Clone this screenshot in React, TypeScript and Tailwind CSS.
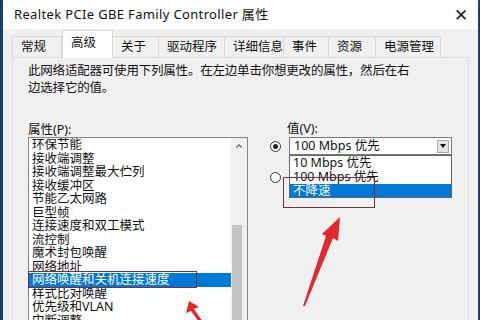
import { ChevronUp } from 'lucide-react'

const font = { fontFamily: '"Noto Sans", "Noto Sans CJK SC", sans-serif' }

const tabs = [
  { label: '常规', w: 'w-[50px]' },
  { label: '高级', w: 'w-[51px]', active: true },
  { label: '关于', w: 'w-[46px]' },
  { label: '驱动程序', w: 'w-[66px]' },
  { label: '详细信息', w: 'w-[59px]' },
  { label: '事件', w: 'w-[45px]' },
  { label: '资源', w: 'w-[47px]' },
  { label: '电源管理', w: 'w-[65px]' },
]

const properties = [
  '环保节能',
  '接收端调整',
  '接收端调整最大伫列',
  '接收缓冲区',
  '节能乙太网路',
  '巨型帧',
  '连接速度和双工模式',
  '流控制',
  '魔术封包唤醒',
  '网络地址',
  '网络唤醒和关机连接速度',
  '样式比对唤醒',
  '优先级和VLAN',
  '中断调整',
  '传输缓冲区',
]

function Radio({ checked }: { checked?: boolean }) {
  return (
    <span className="flex h-[11px] w-[11px] items-center justify-center rounded-full border border-[#333] bg-white">
      {checked && <span className="h-[5px] w-[5px] rounded-full bg-[#222]" />}
    </span>
  )
}

export default function App() {
  return (
    <div className="relative flex h-[320px] w-[480px] overflow-hidden bg-[#17406e] text-[12.5px] text-[#111]" style={font}>
      <div className="ml-[3px] flex w-[475px] flex-col bg-[#f0f0f0]">
        {/* Title bar */}
        <div className="flex h-[29px] shrink-0 items-center justify-between bg-white pl-[11px] pr-[10px]">
          <span className="text-[13px] tracking-[0.35px] text-[#111]">Realtek PCIe GBE Family Controller 属性</span>
          <span className="text-[17px] font-light leading-none text-[#222]">✕</span>
        </div>

        <div className="flex flex-1 flex-col px-[9px]">
          {/* Tabs */}
          <div className="flex h-[28px] items-end">
            {tabs.map((t) =>
              t.active ? (
                <div
                  key={t.label}
                  className={`relative z-10 -mb-px flex h-[28px] items-center border-x border-t border-[#d9d9d9] bg-white pb-[3px] pl-[8px] ${t.w}`}
                >
                  {t.label}
                </div>
              ) : (
                <div
                  key={t.label}
                  className={`flex h-[21px] items-center border-t border-r border-[#d9d9d9] bg-[#f0f0f0] pl-[8px] first:border-l ${t.w}`}
                >
                  {t.label}
                </div>
              ),
            )}
          </div>

          {/* Panel */}
          <div className="relative flex flex-1 flex-col border border-[#dcdcdc] bg-[#f0f0f0] pl-[15px] pt-[4px]">
            <p className="leading-[17px] tracking-[-0.2px]">
              此网络适配器可使用下列属性。在左边单击你想更改的属性，然后在右
              <br />
              边选择它的值。
            </p>

            <div className="mt-[25px] flex flex-1 gap-[22px]">
              {/* Left column */}
              <div className="flex w-[220px] flex-col">
                <div className="h-[17px] leading-[17px]">属性(P):</div>
                <div className="mt-[-1px] flex flex-1 border border-[#82878f] bg-white">
                  <ul className="flex-1">
                    {properties.map((p) => (
                      <li
                        key={p}
                        className={`h-[13.5px] whitespace-nowrap pl-[3px] leading-[13.5px] ${
                          p === '网络唤醒和关机连接速度' ? 'bg-[#0078d7] text-white' : ''
                        }`}
                      >
                        {p}
                      </li>
                    ))}
                  </ul>
                  <div className="flex w-[16px] flex-col bg-[#f0f0f0]">
                    <div className="flex h-[16px] items-center justify-center">
                      <ChevronUp size={10} strokeWidth={2.5} className="text-[#333]" />
                    </div>
                    <div className="mt-[71px] ml-[1px] w-[10px] flex-1 bg-[#c4c4c4]" />
                  </div>
                </div>
              </div>

              {/* Right column */}
              <div className="relative flex flex-col">
                <div className="h-[15px] pl-[17px] leading-[15px]">值(V):</div>
                <div className="mt-[1px] flex items-center gap-[8px]">
                  <Radio checked />
                  <div className="flex h-[18px] w-[163px] items-center justify-between border border-[#7a7a7a] bg-white pl-[4px] pr-[2px]">
                    <span>100 Mbps 优先</span>
                    <span className="flex h-[13px] w-[12px] items-center justify-center border border-[#adadad] bg-[#e5e5e5]">
                      <span className="h-0 w-0 border-x-[3px] border-t-[4px] border-x-transparent border-t-[#111]" />
                    </span>
                  </div>
                </div>
                <div className="mt-[17px] flex items-center">
                  <Radio />
                </div>

                {/* Dropdown list */}
                <div className="absolute left-[19px] top-[34px] z-20 flex w-[163px] flex-col border border-[#646464] bg-white">
                  <div className="h-[14px] pl-[3px] leading-[14px]">10 Mbps 优先</div>
                  <div className="h-[14px] pl-[3px] leading-[14px]">100 Mbps 优先</div>
                  <div className="h-[13px] bg-[#0078d7] pl-[3px] leading-[13px] text-white">不降速</div>
                </div>
              </div>
            </div>
          </div>
        </div>
      </div>

      {/* Annotation boxes */}
      <div className="absolute left-[28px] top-[271px] z-30 h-[17px] w-[169px] border border-[#7b2d3c]" />
      <div className="absolute left-[283px] top-[177px] z-30 h-[31px] w-[92px] border border-[#7b2d3c]" />

      {/* Red arrows */}
      <svg className="absolute left-0 top-0 z-40" width="480" height="320" viewBox="0 0 480 320">
        <path d="M303 306 L326 236 L322 234 L340 217 L338 241 L333 238 L305 306 Z" fill="#e2282d" />
        <path d="M199 322 L191 311 L186 313 L189 301 L199 307 L194 309 L203 322 Z" fill="#e2282d" />
      </svg>
    </div>
  )
}
